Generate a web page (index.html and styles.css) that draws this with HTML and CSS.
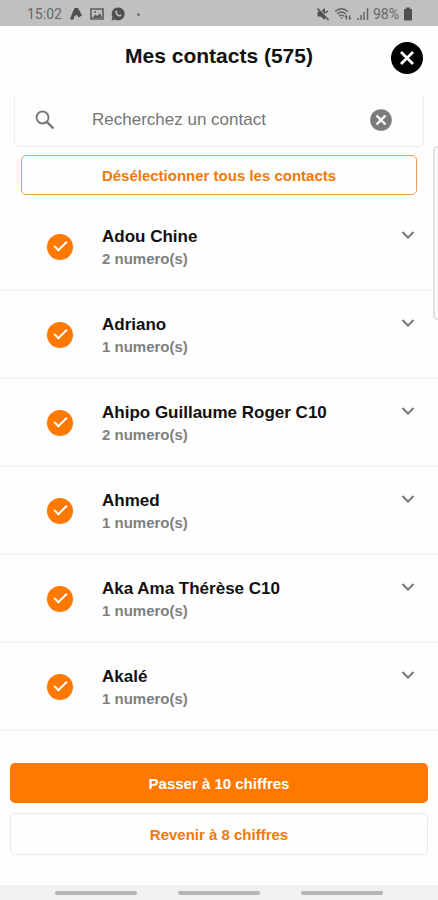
FILE: index.html
```html
<!DOCTYPE html>
<html lang="fr">

<head>
    <meta charset="UTF-8">
    <meta name="viewport" content="width=device-width, initial-scale=1.0">
    <title>Mes contacts</title>
    <link rel="stylesheet" href="styles.css">
</head>

<body>
    <div class="status_bar">
        <div class="status_left">
            <span class="status_time">15:02</span>
            <svg width="14" height="14" viewBox="0 0 14 14"><path d="M5.500 1h3.500l4 7.500-3.500 2-1.500-2.500-2.500 1-1 3.500H1L2.500 8z" fill="#505050"/></svg>
            <svg width="14" height="14" viewBox="0 0 14 14"><path d="M1 2h12v10H1z" fill="none" stroke="#5c5c5c" stroke-width="1.600"/><path d="M2 11l3.500-3.500 2 1.500 2.500-3 2 5z" fill="#5c5c5c"/><circle cx="5" cy="5" r="1" fill="#5c5c5c"/></svg>
            <svg width="14" height="14" viewBox="0 0 14 14"><path d="M7.200.5a6.400 6.400 0 1 1-3 12L.5 13.500l1-3.500A6.400 6.400 0 0 1 7.200.5z" fill="#505050"/><path d="M4.500 4c.8-1 1.500-.5 2 1l-.6 1c.5 1 1.200 1.600 2.200 2l1-.8c1.500.6 1.700 1.200.9 1.900C7.500 11 3.500 7 4.500 4z" fill="#c0c0c0"/></svg>
            <span class="status_dot"></span>
        </div>
        <div class="status_right">
            <svg width="14" height="14" viewBox="0 0 14 14"><path d="M1.500 4.500h3l4.500-3.500v12L4.500 9.500h-3z" fill="#505050"/><path d="M2.500 1l10 11" stroke="#c0c0c0" stroke-width="1.500"/><path d="M1.500 1.500l11 11.500M9 6l3-2" stroke="#505050" stroke-width="1.500"/></svg>
            <svg width="18" height="14" viewBox="0 0 18 14" fill="none" stroke="#606060" stroke-width="1.300"><path d="M1 4.500Q7.500-1 14 4.500M3 7q4.500-4 9 0M5 9.300q2.500-2.300 5 0"/><path d="M7.500 12V10M12.500 12.500V8.500m-1.500 1.500 1.500-1.500M15.500 8.500v4m1.500-1.500-1.500 1.500"/></svg>
            <svg width="13" height="14" viewBox="0 0 13 14" stroke="#666" stroke-width="1.500"><path d="M2 13v-2M5 13V8M8 13V5M11.500 13V1"/></svg>
            <span class="status_battery">98%</span>
            <svg width="10" height="14" viewBox="0 0 10 14"><path d="M3 .5h4V2h2v11.500H1V2h2z" fill="#505050"/></svg>
        </div>
    </div>

    <header class="header">
        <h1>Mes contacts (575)</h1>
        <button class="close_button" aria-label="Fermer">
            <svg width="32" height="32" viewBox="0 0 32 32"><circle cx="16" cy="16" r="16" fill="#000"/><path d="M10 10l12 12M22 10L10 22" stroke="#fff" stroke-width="2.800"/></svg>
        </button>
    </header>

    <main>
        <div class="search_box">
            <label for="search_input" aria-label="Recherche">
                <svg width="20" height="20" viewBox="0 0 20 20" fill="none" stroke="#757575"><circle cx="7.500" cy="7.500" r="6" stroke-width="1.800"/><path d="M11.800 11.800l6.700 6.700" stroke-width="2.400"/></svg>
            </label>
            <input type="text" id="search_input" placeholder="Recherchez un contact">
            <button class="clear_button" aria-label="Effacer">
                <svg width="22" height="22" viewBox="0 0 22 22"><circle cx="11" cy="11" r="10.800" fill="#7b7b7b"/><path d="M6.500 6.500l9 9M15.500 6.500l-9 9" stroke="#fff" stroke-width="2.400"/></svg>
            </button>
        </div>

        <button class="deselect_button">Désélectionner tous les contacts</button>

        <ul class="contact_list">
            <li>
                <input type="checkbox" id="contact_1" checked>
                <label for="contact_1">Adou Chine<span>2 numero(s)</span></label>
                <button class="expand_button" aria-label="Afficher les numéros"><svg width="14" height="10" viewBox="0 0 14 10"><path d="M1.500 2L7 7.500 12.500 2"/></svg></button>
            </li>
            <li>
                <input type="checkbox" id="contact_2" checked>
                <label for="contact_2">Adriano<span>1 numero(s)</span></label>
                <button class="expand_button" aria-label="Afficher les numéros"><svg width="14" height="10" viewBox="0 0 14 10"><path d="M1.500 2L7 7.500 12.500 2"/></svg></button>
            </li>
            <li>
                <input type="checkbox" id="contact_3" checked>
                <label for="contact_3">Ahipo Guillaume Roger C10<span>2 numero(s)</span></label>
                <button class="expand_button" aria-label="Afficher les numéros"><svg width="14" height="10" viewBox="0 0 14 10"><path d="M1.500 2L7 7.500 12.500 2"/></svg></button>
            </li>
            <li>
                <input type="checkbox" id="contact_4" checked>
                <label for="contact_4">Ahmed<span>1 numero(s)</span></label>
                <button class="expand_button" aria-label="Afficher les numéros"><svg width="14" height="10" viewBox="0 0 14 10"><path d="M1.500 2L7 7.500 12.500 2"/></svg></button>
            </li>
            <li>
                <input type="checkbox" id="contact_5" checked>
                <label for="contact_5">Aka Ama Thérèse C10<span>1 numero(s)</span></label>
                <button class="expand_button" aria-label="Afficher les numéros"><svg width="14" height="10" viewBox="0 0 14 10"><path d="M1.500 2L7 7.500 12.500 2"/></svg></button>
            </li>
            <li>
                <input type="checkbox" id="contact_6" checked>
                <label for="contact_6">Akalé<span>1 numero(s)</span></label>
                <button class="expand_button" aria-label="Afficher les numéros"><svg width="14" height="10" viewBox="0 0 14 10"><path d="M1.500 2L7 7.500 12.500 2"/></svg></button>
            </li>
        </ul>

        <div class="actions">
            <button class="primary">Passer à 10 chiffres</button>
            <button class="secondary">Revenir à 8 chiffres</button>
        </div>
    </main>

    <div class="nav_bar">
        <span></span>
        <span></span>
        <span></span>
    </div>

    <div class="edge_handle"></div>
</body>

</html>
```
FILE: styles.css
```css
* {
    box-sizing: border-box;
}

body {
    position: relative;
    display: flex;
    flex-direction: column;
    min-height: 100vh;
    margin: 0;
    overflow-x: hidden;
    font-family: "Liberation Sans", Arial, sans-serif;
    background-color: #fefefe;
    color: #111;
}

button {
    padding: 0;
    border: none;
    background: none;
    font-family: inherit;
    cursor: pointer;
}

svg {
    display: block;
}

/* barre d'état */
.status_bar {
    display: flex;
    justify-content: space-between;
    align-items: center;
    height: 26px;
    padding: 2px 25px 0 27px;
    background-color: #c0c0c0;
    color: #666;
    font-family: Roboto, sans-serif;
    font-size: 14px;
}

.status_left,
.status_right {
    display: flex;
    align-items: center;
}

.status_left {
    gap: 7px;
}

.status_right {
    gap: 4px;
}

.status_dot {
    width: 3px;
    height: 3px;
    margin-left: 5px;
    border-radius: 50%;
    background-color: #777;
}

/* en-tête */
.header {
    display: grid;
    grid-template-columns: 32px 1fr 32px;
    align-items: center;
    height: 64px;
    padding: 0 15px;
}

.header h1 {
    grid-column: 2;
    margin: 0;
    padding-bottom: 4px;
    font-size: 21px;
    line-height: 24px;
    text-align: center;
}

/* recherche */
.search_box {
    display: flex;
    align-items: center;
    height: 56px;
    margin: 0 15px;
    padding: 4px 31px 0 20px;
    border-radius: 4px;
    box-shadow: 0 0 2px rgba(0, 0, 0, 0.22);
    clip-path: inset(4px -4px -4px -4px);
}

.search_box input {
    flex: 1;
    min-width: 0;
    margin-left: 37px;
    padding: 0;
    border: none;
    outline: none;
    background: none;
    font-family: inherit;
    font-size: 17px;
}

.search_box input::placeholder {
    color: #757575;
    opacity: 1;
}

.deselect_button {
    display: block;
    width: calc(100% - 42px);
    height: 40px;
    margin: 9px 21px 0;
    border: 1px solid #f39a4c;
    border-radius: 5px;
    color: #f07a0c;
    font-size: 15px;
    font-weight: bold;
}

/* liste des contacts */
.contact_list {
    margin: 8px 0 0;
    padding: 0;
    list-style: none;
}

.contact_list li {
    display: flex;
    align-items: center;
    height: 88px;
    padding: 0 20px 0 47px;
    border-bottom: 1px solid #f1f1f1;
}

.contact_list input {
    display: grid;
    place-items: center;
    flex: none;
    width: 26px;
    height: 26px;
    margin: 0;
    border: 2px solid #ff7900;
    border-radius: 50%;
    appearance: none;
}

.contact_list input:checked {
    background-color: #ff7900;
}

.contact_list input:checked::after {
    content: "";
    width: 11px;
    height: 5px;
    margin-bottom: 4px;
    border: solid #fff;
    border-width: 0 0 2px 2px;
    transform: rotate(-45deg);
}

.contact_list label {
    flex: 1;
    margin-left: 29px;
    padding-top: 1px;
    font-size: 17px;
    font-weight: bold;
    line-height: 24px;
}

.contact_list label span {
    display: block;
    color: #808080;
    font-size: 15px;
    line-height: 20px;
}

.expand_button {
    align-self: flex-start;
    padding: 27px 3px;
}

.expand_button path {
    fill: none;
    stroke: #777;
    stroke-width: 2;
}

/* actions */
.actions {
    display: flex;
    flex-direction: column;
    gap: 10px;
    margin: 32px 10px 0;
}

.actions button {
    height: 40px;
    border-radius: 5px;
    font-size: 15px;
    font-weight: bold;
}

.actions .primary {
    background-color: #ff7900;
    color: #fff;
}

.actions .secondary {
    height: 42px;
    border: 1px solid #e9e9ec;
    color: #f07a0c;
}

/* barre de navigation */
.nav_bar {
    display: flex;
    justify-content: center;
    align-items: center;
    gap: 41px;
    height: 15px;
    margin-top: auto;
    background-color: #f1f1f1;
}

.nav_bar span {
    width: 82px;
    height: 4px;
    border-radius: 2px;
    background-color: #b5b5b5;
}

/* poignée du panneau latéral */
.edge_handle {
    position: absolute;
    top: 146px;
    right: -4px;
    width: 9px;
    height: 174px;
    border: 2px solid #e2e2e2;
    border-radius: 5px;
    background-color: #fafafa;
}
```
